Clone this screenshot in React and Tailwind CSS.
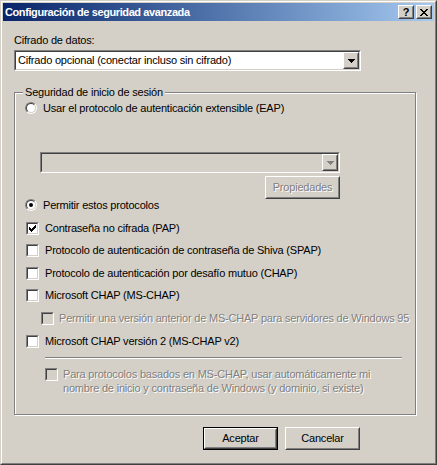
import React from "react";

const FONT = "font-['Liberation_Sans',Arial,sans-serif]";

function Sunken({ className = "", inner = "bg-white", children }) {
  return (
    <div className={"border border-t-[#808080] border-l-[#808080] border-r-white border-b-white " + className}>
      <div className={"h-full w-full border border-t-[#404040] border-l-[#404040] border-r-[#d4d0c8] border-b-[#d4d0c8] " + inner}>
        {children}
      </div>
    </div>
  );
}

function Raised({ className = "", children, def = false }) {
  const btn = (
    <div className={"border border-t-white border-l-white border-r-[#404040] border-b-[#404040] " + (def ? "h-full w-full" : className)}>
      <div className="h-full w-full border border-t-[#d4d0c8] border-l-[#d4d0c8] border-r-[#808080] border-b-[#808080] flex items-center justify-center bg-[#d4d0c8]">
        {children}
      </div>
    </div>
  );
  if (def) return <div className={"border border-black " + className}>{btn}</div>;
  return btn;
}

function Arrow({ disabled }) {
  return (
    <svg width="7" height="4" viewBox="0 0 7 4" className="block">
      <path d="M0 0h7v1H0zM1 1h5v1H1zM2 2h3v1H2zM3 3h1v1H3z" fill={disabled ? "#808080" : "#000"} />
    </svg>
  );
}

function Radio({ checked }) {
  return (
    <div className="w-[12px] h-[12px] shrink-0 rounded-full border border-t-[#808080] border-l-[#808080] border-r-white border-b-white">
      <div className="w-full h-full rounded-full border border-t-[#404040] border-l-[#404040] border-r-[#d4d0c8] border-b-[#d4d0c8] bg-white flex items-center justify-center">
        {checked && <div className="w-[4px] h-[4px] rounded-full bg-black" />}
      </div>
    </div>
  );
}

function Check({ checked, disabled }) {
  return (
    <Sunken className="w-[13px] h-[13px] shrink-0" inner={disabled ? "bg-[#d4d0c8]" : "bg-white"}>
      {checked && (
        <svg width="9" height="9" viewBox="0 0 9 9" className="block ml-[1px] mt-[1px]">
          <path d="M6 1h1v1H6zM5 2h2v1H5zM0 3h1v1H0zM4 3h3v1H4zM0 4h2v1H0zM3 4h3v1H3zM0 5h5v1H0zM1 6h3v1H1zM2 7h1v1H2z" fill="#000" transform="translate(0,-1)" />
        </svg>
      )}
    </Sunken>
  );
}

const dis = "text-[#808080] [text-shadow:1px_1px_0_#fff]";

export default function App() {
  return (
    <div className={"w-[437px] h-[465px] bg-[#d4d0c8] text-[11px] leading-[13px] tracking-[-0.2px] text-black whitespace-nowrap " + FONT}>
      <div className="w-full h-full border border-t-[#d4d0c8] border-l-[#d4d0c8] border-r-[#404040] border-b-[#404040]">
        <div className="w-full h-full border border-t-white border-l-white border-r-[#808080] border-b-[#808080] p-[1px] flex flex-col">
          {/* Title bar */}
          <div className="h-[18px] shrink-0 flex items-center bg-gradient-to-r from-[#0a246a] to-[#a6caf0] pl-[2px] pr-[2px]">
            <span className="text-white font-bold text-[11px] leading-[13px] font-['Liberation_Sans',sans-serif] tracking-[-0.4px]">
              Configuración de seguridad avanzada
            </span>
            <div className="ml-auto flex gap-[2px] tracking-normal">
              <Raised className="w-[16px] h-[14px]">
                <span className="font-bold text-[11px] leading-[10px] font-['Liberation_Sans',sans-serif]">?</span>
              </Raised>
              <Raised className="w-[16px] h-[14px]">
                <svg width="8" height="7" viewBox="0 0 8 7" className="block">
                  <path d="M0 0h2v1H0zM6 0h2v1H6zM1 1h2v1H1zM5 1h2v1H5zM2 2h4v1H2zM3 3h2v1H3zM2 4h4v1H2zM1 5h2v1H1zM5 5h2v1H5zM0 6h2v1H0zM6 6h2v1H6z" fill="#000" />
                </svg>
              </Raised>
            </div>
          </div>

          {/* Content */}
          <div className="pl-[11px] flex flex-col">
            <div className="mt-[13px]">Cifrado de datos:</div>
            <Sunken className="mt-[3px] w-[347px] h-[21px]">
              <div className="h-full flex items-center">
                <span className="pl-[2px]">Cifrado opcional (conectar incluso sin cifrado)</span>
                <div className="ml-auto h-full p-0">
                  <Raised className="w-[16px] h-[17px]">
                    <Arrow />
                  </Raised>
                </div>
              </div>
            </Sunken>

            {/* Group box */}
            <div className="mt-[21px] w-[402px] h-[323px] relative border border-[#808080] shadow-[1px_1px_0_#fff,inset_1px_1px_0_#fff]">
              <div className="absolute left-[8px] -top-[7px] px-[2px] bg-[#d4d0c8]">Seguridad de inicio de sesión</div>
              <div className="flex flex-col pl-[10px]">
                <div className="mt-[8px] h-[14px] flex items-center gap-[6px]">
                  <Radio />
                  <span>Usar el protocolo de autenticación extensible (EAP)</span>
                </div>
                <div className="ml-[15px] w-[300px] mt-[37px] flex flex-col items-end">
                  <Sunken className="w-[300px] h-[21px]" inner="bg-[#d4d0c8]">
                    <div className="h-full flex items-center justify-end">
                      <Raised className="w-[16px] h-[17px]">
                        <Arrow disabled />
                      </Raised>
                    </div>
                  </Sunken>
                  <Raised className="mt-[3px] w-[75px] h-[23px]">
                    <span className={dis}>Propiedades</span>
                  </Raised>
                </div>
                <div className="h-[12px] flex items-center gap-[6px]">
                  <Radio checked />
                  <span>Permitir estos protocolos</span>
                </div>
                <div className="mt-[11px] h-[13px] flex items-center gap-[6px] pl-[1px]">
                  <Check checked />
                  <span>Contraseña no cifrada (PAP)</span>
                </div>
                <div className="mt-[9px] h-[13px] flex items-center gap-[6px] pl-[1px]">
                  <Check />
                  <span>Protocolo de autenticación de contraseña de Shiva (SPAP)</span>
                </div>
                <div className="mt-[10px] h-[13px] flex items-center gap-[6px] pl-[1px]">
                  <Check />
                  <span>Protocolo de autenticación por desafío mutuo (CHAP)</span>
                </div>
                <div className="mt-[9px] h-[13px] flex items-center gap-[6px] pl-[1px]">
                  <Check />
                  <span>Microsoft CHAP (MS-CHAP)</span>
                </div>
                <div className="mt-[10px] h-[13px] flex items-center gap-[5px] pl-[16px]">
                  <Check disabled />
                  <span className={dis}>Permitir una versión anterior de MS-CHAP para servidores de Windows 95</span>
                </div>
                <div className="mt-[10px] h-[13px] flex items-center gap-[6px] pl-[1px]">
                  <Check />
                  <span>Microsoft CHAP versión 2 (MS-CHAP v2)</span>
                </div>
                <div className="mt-[9px] ml-[20px] w-[357px] h-[2px] border-t border-t-[#808080] border-b border-b-white" />
                <div className="mt-[9px] flex items-start gap-[5px] pl-[20px]">
                  <Check disabled />
                  <span className={"leading-[14px] -mt-[1px] " + dis}>
                    Para protocolos basados en MS-CHAP, usar automáticamente mi
                    <br />
                    nombre de inicio y contraseña de Windows (y dominio, si existe)
                  </span>
                </div>
              </div>
            </div>

            {/* Buttons */}
            <div className="mt-[12px] ml-[189px] flex gap-[7px]">
              <Raised def className="w-[75px] h-[23px]">
                <span>Aceptar</span>
              </Raised>
              <Raised className="w-[75px] h-[23px]">
                <span>Cancelar</span>
              </Raised>
            </div>
          </div>
        </div>
      </div>
    </div>
  );
}
